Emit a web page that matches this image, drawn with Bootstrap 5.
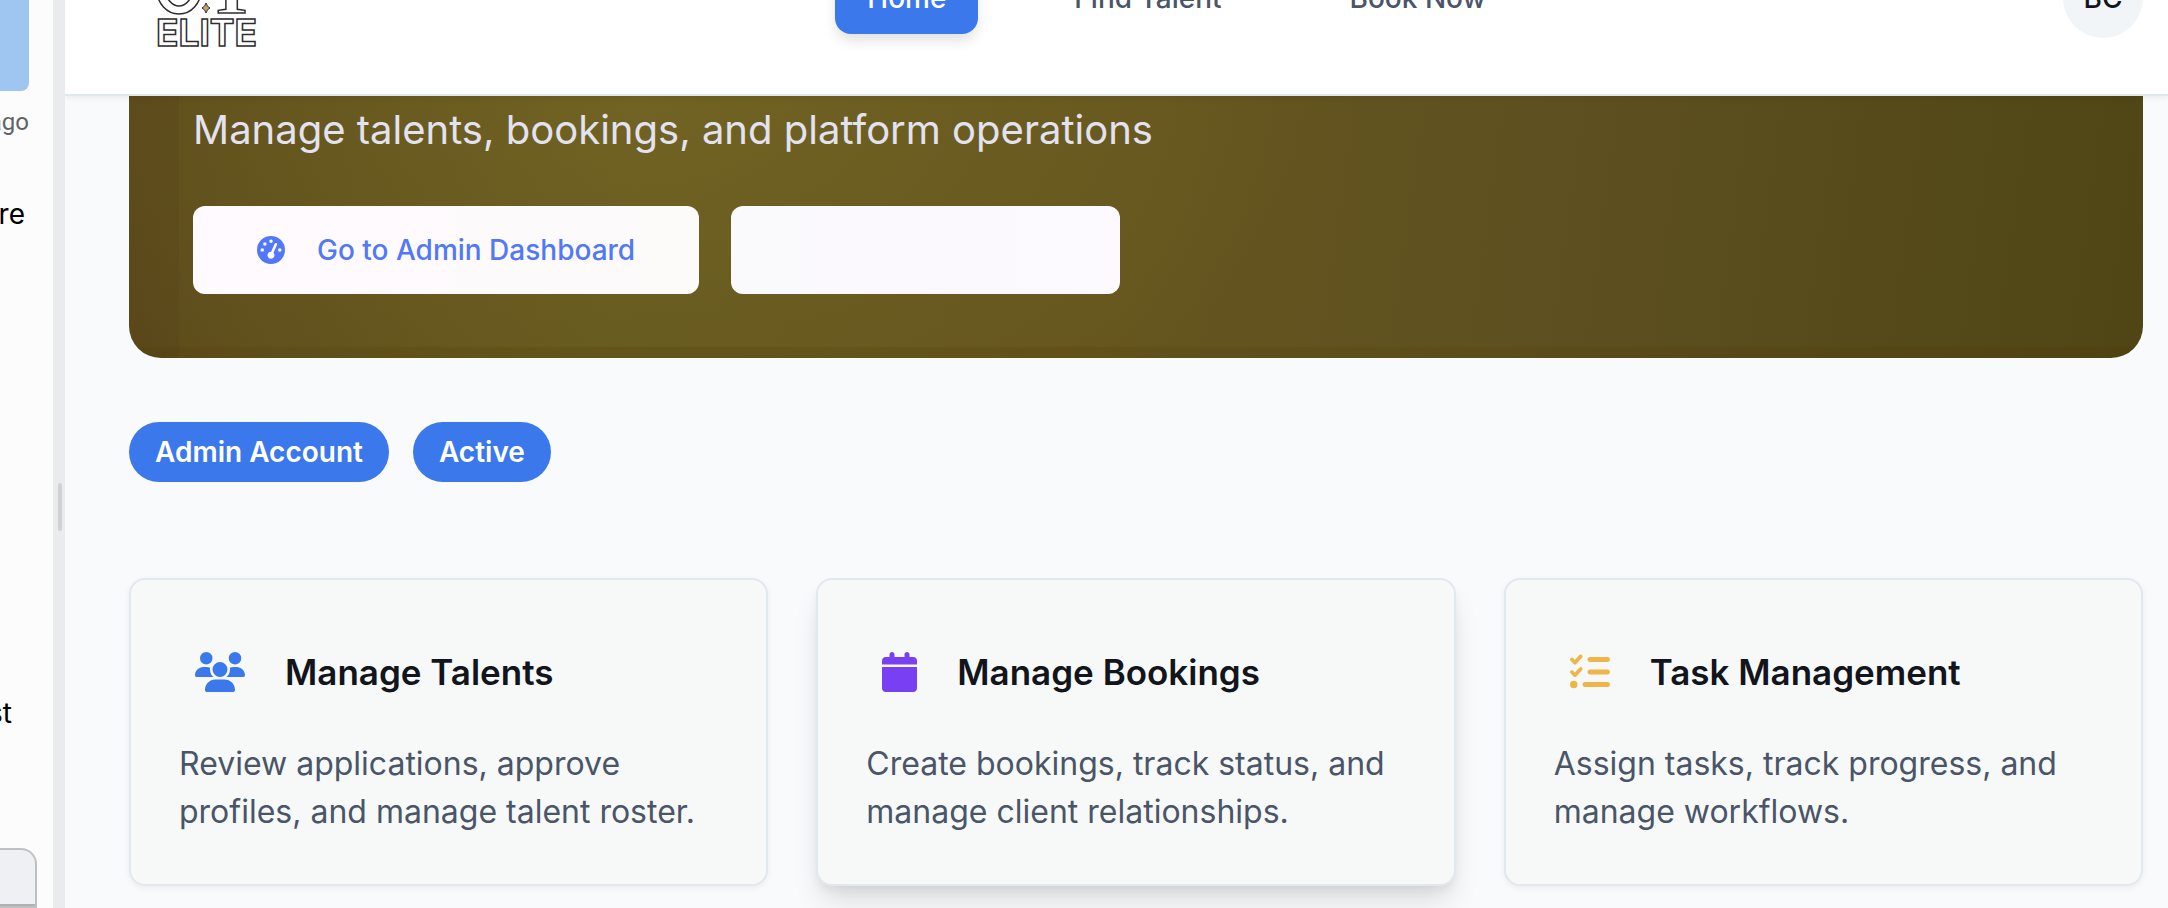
<!DOCTYPE html>
<html lang="en">
<head>
<meta charset="utf-8">
<meta name="viewport" content="width=device-width, initial-scale=1">
<title>OT Elite – Admin</title>
<link href="https://cdn.jsdelivr.net/npm/bootstrap@5.3.0/dist/css/bootstrap.min.css" rel="stylesheet">
<style>
  body { font-family: Inter, "Liberation Sans", sans-serif; font-size: 28px; line-height: 40px; background: #f9fafc; color: #12151b; }
  .side-pane { width: 53px; flex: none; background: #fcfcfc; color: #000; }
  .thumb { width: 29px; height: 91px; background: #9fc5f1; border-radius: 0 0 8px 0; }
  .side-line { display: flex; justify-content: flex-end; white-space: nowrap; }
  .stamp { width: 29px; font-family: Roboto, sans-serif; font-size: 24px; line-height: 32px; color: #5f6368; margin-top: 15px; }
  .line-a { width: 25px; margin-top: 56px; }
  .line-b { width: 12px; margin-top: 459px; }
  .composer { width: 37px; margin-top: 115px; height: 60px; border: 2px solid #bfc0c2; border-left: 0; border-radius: 0 16px 0 0; background: #eff0f3; }
  .composer-top { height: 56px; border-bottom: 2px solid #b0b1b3; }
  .splitter { width: 12px; flex: none; background: #eaebec; }
  .grip { width: 4px; height: 48px; border-radius: 2px; background: #d0d1d3; margin: 483px 0 0 5px; }
  .top-bar { height: 194px; margin-top: -98px; padding: 0 25px 0 89px; background: #fff; border-bottom: 2px solid #e1e8ed; box-shadow: 0 2px 6px rgba(0,0,0,.06); position: relative; z-index: 1; }
  .top-nav { gap: 64px; }
  .top-link { padding: 16px 32px; border-radius: 16px; font-weight: 500; color: #4a5568; text-decoration: none; }
  .top-link.current { background: #3b78eb; color: #fff; box-shadow: 0 8px 14px -2px rgba(0,0,0,.13); }
  .avatar { width: 80px; height: 80px; background: #f1f5f8; border: 0; border-radius: 50%; font-weight: 500; color: #12151b; }
  .page-body { padding: 0 25px 64px 64px; }
  .hero { padding: 10px 64px 64px; border-radius: 0 0 32px 32px;
    background:
      linear-gradient(90deg, rgba(70,45,20,.12) 0 50px, transparent 50px),
      linear-gradient(0deg, rgba(80,60,0,.2) 0 10px, transparent 12px),
      radial-gradient(ellipse 700px 380px at 25% 0%, rgba(124,110,38,.5), transparent),
      linear-gradient(98deg, #5b4a1b, #65581f 25%, #65561f 50%, #5d4f20 72%, #4f4515); }
  .hero-text { font-size: 40px; line-height: 48px; color: #e3e2f0; margin-bottom: 52px; }
  .hero-actions { gap: 32px; }
  .hero-btn { height: 88px; border: 0; border-radius: 12px; padding: 0 64px; gap: 32px; font-size: 28px; font-weight: 500; color: #5078f8; background: linear-gradient(90deg, #fefaff, #fdfafa); }
  .hero-btn.blank { width: 389px; background: linear-gradient(90deg, #faf9fc, #fcf9ff); }
  .pills { margin: 64px 0 96px; gap: 24px; }
  .tag { padding: 10px 26px; border-radius: 30px; background: #3b78eb; color: #fff; font-weight: 600; }
  .cards { --bs-gutter-x: 48px; }
  .tile { padding: 48px; border: 2px solid #e2e8f0; border-radius: 16px; background: #f7f9f9; box-shadow: 0 2px 6px rgba(0,0,0,.06); }
  .tile.raised { box-shadow: 0 20px 30px -6px rgba(0,0,0,.12), 0 6px 12px -2px rgba(0,0,0,.07); }
  .tile-head { height: 88px; padding-left: 16px; gap: 40px; margin-bottom: 24px; }
  .tile-title { font-size: 35px; line-height: 40px; font-weight: 600; margin: 0; white-space: nowrap; }
  .tile-text { font-size: 32px; line-height: 48px; color: #4a5568; margin: 0; }
  svg { flex: none; display: block; }
</style>
</head>
<body>
<div class="d-flex vh-100 overflow-hidden">
  <aside class="side-pane overflow-hidden">
    <div class="thumb"></div>
    <div class="side-line stamp">ago</div>
    <div class="side-line line-a">re</div>
    <div class="side-line line-b">st</div>
    <div class="composer"><div class="composer-top"></div></div>
  </aside>
  <div class="splitter"><div class="grip"></div></div>
  <div class="flex-grow-1 overflow-hidden">
    <header class="top-bar d-flex align-items-center justify-content-between">
      <a href="#" aria-label="OT Elite">
        <svg width="136" height="100" viewBox="0 0 136 100" fill="none" stroke="#2d2d2f" stroke-width="1.5">
          <ellipse cx="25" cy="42" rx="22" ry="24"/>
          <ellipse cx="25" cy="42" rx="13" ry="16"/>
          <text x="53" y="65" font-family="Liberation Serif, serif" font-weight="700" font-size="74">T</text>
          <path d="M52 55q1 4 4 5q-3 1-4 5q-1-4-4-5q3-1 4-5z" fill="#c9a35c" stroke-width="1"/>
          <text x="2" y="98" font-family="Inter, sans-serif" font-weight="700" font-size="37">ELITE</text>
        </svg>
      </a>
      <nav class="top-nav d-flex" aria-label="Main">
        <a class="top-link current" href="#">Home</a>
        <a class="top-link" href="#">Find Talent</a>
        <a class="top-link" href="#">Book Now</a>
      </nav>
      <button class="avatar p-0" type="button">BC</button>
    </header>
    <main class="page-body">
      <section class="hero">
        <p class="hero-text">Manage talents, bookings, and platform operations</p>
        <div class="hero-actions d-flex">
          <button class="hero-btn d-flex align-items-center" type="button">
            <svg width="28" height="28" viewBox="0 0 512 512" fill="currentColor"><path d="M0 256a256 256 0 1 1 512 0A256 256 0 1 1 0 256zM288 96a32 32 0 1 0-64 0 32 32 0 1 0 64 0zM256 416c35.300 0 64-28.700 64-64c0-17.400-6.900-33.100-18.100-44.600L366 161.700c5.300-12.100-.2-26.300-12.300-31.600s-26.300 .2-31.600 12.300L257.900 288c-.6 0-1.300 0-1.900 0c-35.300 0-64 28.700-64 64s28.700 64 64 64zM176 144a32 32 0 1 0-64 0 32 32 0 1 0 64 0zM96 288a32 32 0 1 0 0-64 32 32 0 1 0 0 64zm352-32a32 32 0 1 0-64 0 32 32 0 1 0 64 0z"/></svg>
            Go to Admin Dashboard
          </button>
          <button class="hero-btn blank" type="button" aria-label="More"></button>
        </div>
      </section>
      <div class="pills d-flex">
        <span class="tag">Admin Account</span>
        <span class="tag">Active</span>
      </div>
      <div class="row cards">
        <div class="col-4">
          <article class="tile">
            <div class="tile-head d-flex align-items-center">
              <svg width="50" height="40" viewBox="0 0 640 512" fill="#3b78eb"><path d="M144 0a80 80 0 1 1 0 160A80 80 0 1 1 144 0zM512 0a80 80 0 1 1 0 160A80 80 0 1 1 512 0zM0 298.700C0 239.800 47.800 192 106.700 192h42.700c15.900 0 31 3.500 44.600 9.700c-1.300 7.200-1.900 14.700-1.900 22.300c0 38.200 16.800 72.500 43.300 96c-.2 0-.4 0-.7 0H21.300C9.600 320 0 310.400 0 298.700zM405.300 320c-.2 0-.4 0-.7 0c26.600-23.500 43.300-57.800 43.300-96c0-7.600-.7-15-1.900-22.300c13.600-6.300 28.700-9.700 44.600-9.700h42.700C592.200 192 640 239.800 640 298.700c0 11.800-9.600 21.300-21.300 21.300H405.300zM224 224a96 96 0 1 1 192 0 96 96 0 1 1-192 0zM128 485.300C128 411.700 187.700 352 261.300 352H378.700C452.300 352 512 411.700 512 485.300c0 14.700-11.900 26.700-26.700 26.700H154.700c-14.700 0-26.700-11.900-26.700-26.700z"/></svg>
              <h2 class="tile-title">Manage Talents</h2>
            </div>
            <p class="tile-text">Review applications, approve profiles, and manage talent roster.</p>
          </article>
        </div>
        <div class="col-4">
          <article class="tile raised">
            <div class="tile-head d-flex align-items-center">
              <svg width="35" height="40" viewBox="0 0 448 512" fill="#7840f2"><path d="M96 32V64H48C21.500 64 0 85.500 0 112v48H448V112c0-26.500-21.500-48-48-48H352V32c0-17.700-14.300-32-32-32s-32 14.300-32 32V64H160V32c0-17.700-14.300-32-32-32S96 14.300 96 32zM448 192H0V464c0 26.500 21.500 48 48 48H400c26.500 0 48-21.500 48-48V192z"/></svg>
              <h2 class="tile-title">Manage Bookings</h2>
            </div>
            <p class="tile-text">Create bookings, track status, and manage client relationships.</p>
          </article>
        </div>
        <div class="col-4">
          <article class="tile">
            <div class="tile-head d-flex align-items-center">
              <svg width="40" height="40" viewBox="0 0 512 512" fill="#f0b548"><path d="M152.100 38.200c9.900 8.900 10.700 24 1.800 33.900l-72 80c-4.400 4.900-10.600 7.800-17.200 7.900s-12.900-2.400-17.600-7L7 113C-2.300 103.600-2.300 88.400 7 79s24.600-9.400 33.900 0l22.100 22.100 55.100-61.200c8.900-9.900 24-10.700 33.900-1.800zm0 160c9.900 8.900 10.700 24 1.800 33.900l-72 80c-4.400 4.900-10.600 7.800-17.200 7.900s-12.900-2.400-17.600-7L7 273c-9.400-9.400-9.400-24.600 0-33.900s24.600-9.400 33.900 0l22.100 22.100 55.100-61.200c8.900-9.900 24-10.700 33.900-1.800zM224 96c0-17.700 14.300-32 32-32H480c17.700 0 32 14.300 32 32s-14.300 32-32 32H256c-17.700 0-32-14.300-32-32zm0 160c0-17.700 14.300-32 32-32H480c17.700 0 32 14.300 32 32s-14.300 32-32 32H256c-17.700 0-32-14.300-32-32zM160 416c0-17.700 14.300-32 32-32H480c17.700 0 32 14.300 32 32s-14.300 32-32 32H192c-17.700 0-32-14.300-32-32zM48 368a48 48 0 1 1 0 96 48 48 0 1 1 0-96z"/></svg>
              <h2 class="tile-title">Task Management</h2>
            </div>
            <p class="tile-text">Assign tasks, track progress, and manage workflows.</p>
          </article>
        </div>
      </div>
    </main>
  </div>
</div>
<script src="https://cdn.jsdelivr.net/npm/bootstrap@5.3.0/dist/js/bootstrap.bundle.min.js"></script>
</body>
</html>
